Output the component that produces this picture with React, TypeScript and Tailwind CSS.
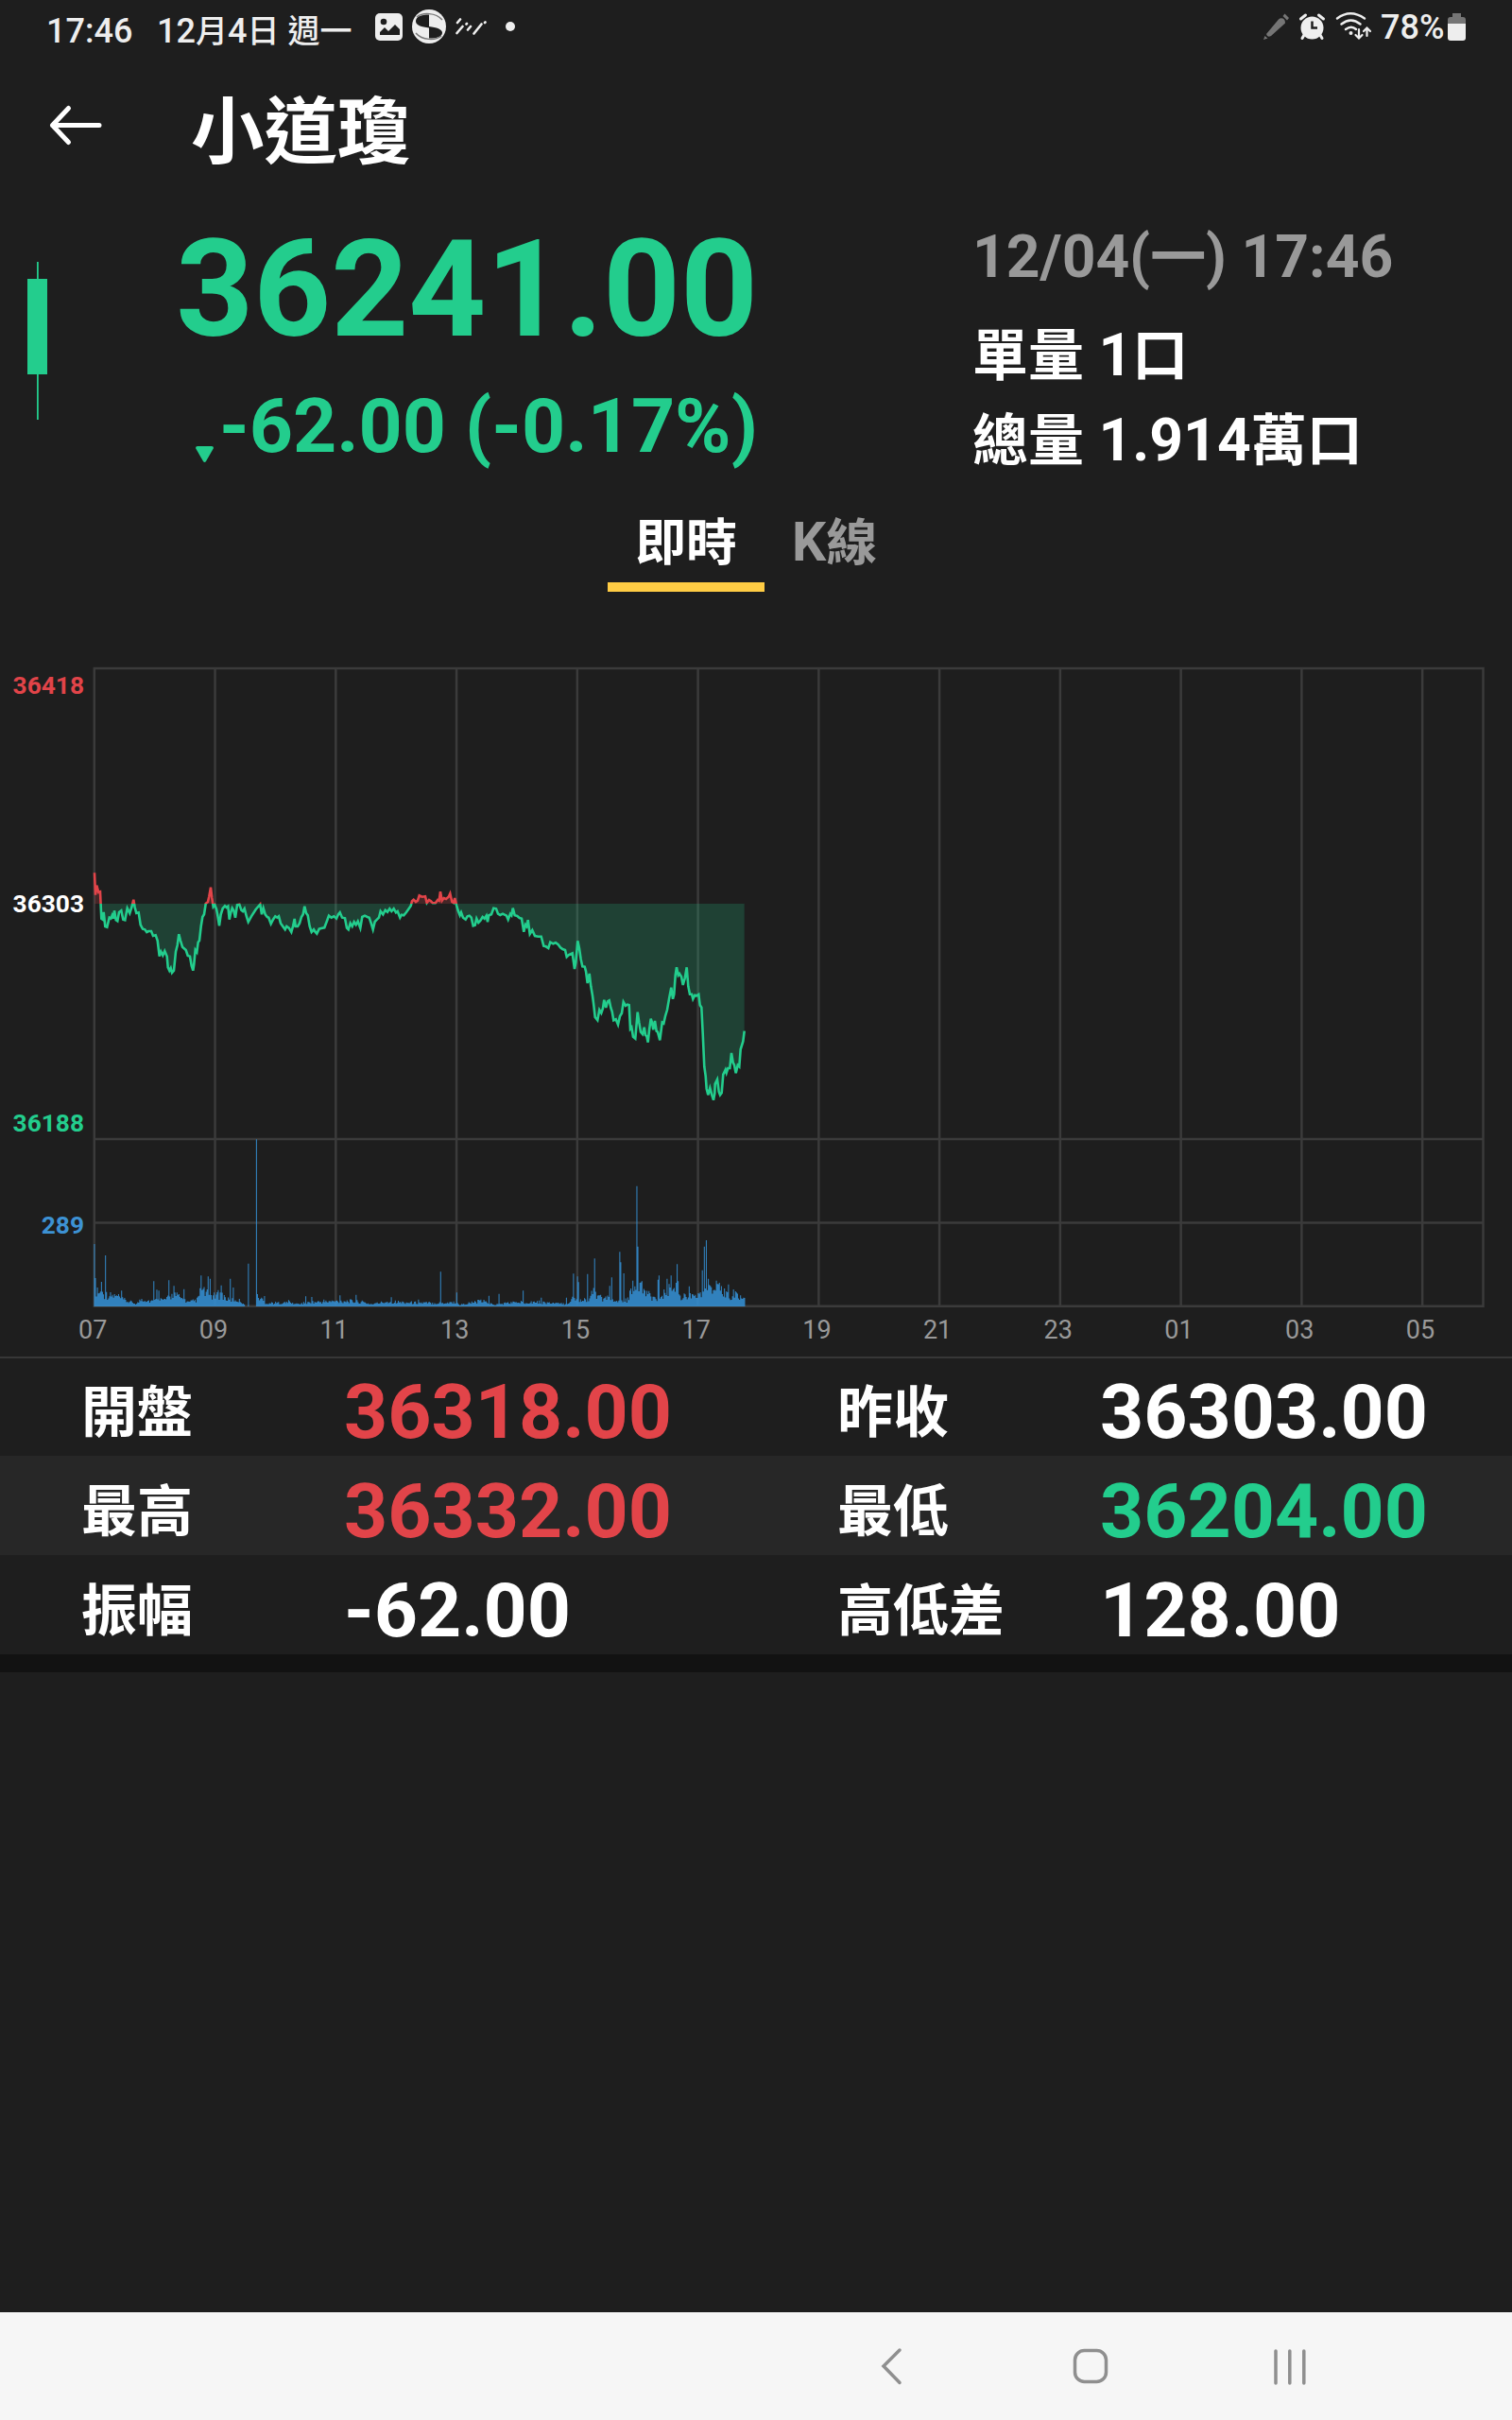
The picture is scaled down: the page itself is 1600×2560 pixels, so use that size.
import { Fragment } from "react";

type Origin = { x: number; y: number };

type Stat = {
  label: string;
  value: string;
  color: string;
};

const UP = "#e24449";
const DOWN = "#23cd8d";
const BLUE = "#3d92d4";

const stats: Stat[][] = [
  [
    { label: "開盤", value: "36318.00", color: "text-[#e24449]" },
    { label: "昨收", value: "36303.00", color: "text-white" },
  ],
  [
    { label: "最高", value: "36332.00", color: "text-[#e24449]" },
    { label: "最低", value: "36204.00", color: "text-[#23cd8d]" },
  ],
  [
    { label: "振幅", value: "-62.00", color: "text-white" },
    { label: "高低差", value: "128.00", color: "text-white" },
  ],
];

const hours = ["07", "09", "11", "13", "15", "17", "19", "21", "23", "01", "03", "05"];

// Price samples, in thirds of a pixel against each session's own origin
const MORNING =
  "300,130 303,200 307,170 313,192 318,190 322,275 326,278 329,255 334,300 340,302 347,272 352,275 356,265 360,275 363,250 368,280 373,283 378,255 385,250 391,278 397,280 404,242 412,258 418,240 424,215 428,240 433,258 440,256 446,295 453,308 460,310 466,318 472,315 480,315 486,330 494,328 500,345 506,395 511,380 517,392 523,378 530,395 533,430 538,440 542,432 546,447 552,440 558,380 563,360 568,325 573,345 579,365 590,375 596,393 603,395 608,425 613,440 616,420 620,375 625,382 629,350 633,345 638,300 643,270 648,262 653,228 660,222 664,205 669,176 673,210 677,238 682,232 687,245 691,265 696,298 701,262 707,243 714,235 719,240 724,236 728,278 733,255 737,242 742,250 747,272 753,232 760,230 766,248 771,252 776,244 783,270 788,286 798,268 812,246 826,230 831,262 836,242 842,262 848,270 853,272 860,292 867,278 874,268 880,272 885,268 891,290 898,300 905,310 910,300 917,305 925,318 930,300 935,276 938,300 945,300 951,290 957,270 962,262 967,236 972,258 977,265 983,300 989,318 996,310 1001,318 1006,323 1013,308 1020,306 1030,304 1037,285 1044,266 1052,272 1060,268 1068,275 1074,262 1079,256 1086,272 1095,274 1101,305 1106,310 1112,290 1118,300 1124,286 1130,295 1136,284 1144,305 1150,270 1158,266 1166,270 1172,272 1178,290 1184,310 1190,285 1197,278 1203,272 1208,252 1216,262 1223,248 1230,254 1237,244 1243,252 1250,244 1257,256";
const AFTERNOON =
  "62,192 70,212 75,203 82,205 90,195 97,185 104,175 108,160 113,155 120,162 126,158 131,142 140,146 150,145 155,165 162,156 168,160 174,166 182,166 190,156 194,158 198,130 203,158 209,150 216,153 224,146 229,136 235,162 240,165 244,150 249,172 254,190 260,205 264,196 270,212 278,218 284,208 290,206 296,212 302,238 308,236 313,215 319,228 325,222 332,210 338,215 344,206 348,226 352,205 360,202 367,182 375,184 381,200 388,204 396,200 408,206 413,218 420,200 424,205 428,182 434,205 442,207 449,213 456,215 463,257 468,235 472,240 476,220 482,264 490,252 498,270 508,272 518,272 526,302 533,304 541,309 547,290 556,295 564,292 572,298 579,307 586,312 594,315 599,337 606,330 617,325 624,375 628,355 634,286 639,310 644,345 649,367 656,368 660,382 665,420 671,390 676,430 681,460 685,490 689,528 697,538 703,505 709,515 714,500 718,473 724,498 729,478 734,475 739,498 743,510 748,538 755,535 762,552 768,525 774,515 779,480 786,492 792,488 797,490 801,565 805,560 810,590 817,596 824,512 829,545 834,575 840,582 845,560 849,585 853,588 857,608 861,570 866,533 870,545 874,568 879,540 884,572 888,575 895,601 902,545 907,548 912,525 918,505 924,470 931,434 936,470 940,455 944,395 948,370 953,395 957,390 963,400 968,426 974,405 980,370 985,430 990,455 996,455 1000,470 1006,458 1012,460 1018,456 1022,490 1027,497 1031,580 1036,685 1040,715 1043,755 1048,775 1054,753 1060,775 1065,791 1069,770 1070,740 1077,726 1082,765 1086,775 1091,768 1096,710 1103,695 1106,705 1111,690 1117,690 1122,642 1127,672 1131,680 1136,706 1142,680 1147,685 1151,630 1159,605 1163,572";

// Chart geometry, in svg pixels
const LEFT = 99.8;
const RIGHT = 1569.5;
const TOP = 67;
const REF = 316;
const SPLIT = 565;
const MID = 653.5;
const BOTTOM = 741.7;
const HOUR_STEP = 127.76;

function parse(src: string, origin: Origin) {
  return src.split(" ").map((pair) => {
    const [x, y] = pair.split(",").map(Number);
    return [LEFT + 0.2 + (x - origin.x) / 3, REF + (y - origin.y) / 3];
  });
}

const prices = [
  ...parse(MORNING, { x: 300, y: 228 }),
  ...parse(AFTERNOON, { x: -900, y: 168 }),
];
const pricePath = "M" + prices.map(([x, y]) => `${x.toFixed(1)} ${y.toFixed(1)}`).join("L");
const lastX = prices[prices.length - 1][0].toFixed(1);
const areaPath = `${pricePath}L${lastX} ${REF}L100 ${REF}Z`;

// Typical volume level by position: [x, height]
const levels = [
  [0, 62], [20, 50], [45, 40], [75, 36], [100, 20], [135, 10], [150, 28], [185, 18],
  [198, 50], [215, 22], [235, 30], [252, 46], [275, 30], [300, 14], [328, 25], [338, 60],
  [360, 45], [385, 35], [402, 45], [425, 24], [445, 25], [465, 20], [476, 8], [477, 0],
  [512, 0], [513, 36], [530, 28], [545, 12], [620, 14], [640, 9], [700, 16], [800, 20],
  [850, 16], [880, 8], [930, 18], [1000, 14], [1100, 12], [1140, 16], [1160, 6],
  [1230, 20], [1270, 6], [1320, 14], [1400, 17], [1480, 10], [1500, 8], [1515, 28],
  [1570, 26], [1582, 50], [1602, 44], [1615, 22], [1640, 36], [1650, 14], [1690, 22],
  [1702, 48], [1718, 72], [1742, 60], [1765, 36], [1800, 26], [1815, 60], [1850, 68],
  [1864, 30], [1885, 46], [1905, 30], [1925, 52], [1960, 62], [1985, 60], [2012, 40],
  [2035, 42], [2063, 28],
];

const spikes = [
  [1, 198], [4, 90], [10, 60], [22, 78], [34, 162], [85, 50], [190, 80], [205, 50],
  [238, 83], [252, 65], [283, 55], [340, 98], [360, 95], [367, 88], [392, 52], [402, 67],
  [430, 88], [440, 60], [488, 136], [513, 530], [540, 33], [618, 20], [670, 32], [690, 30],
  [730, 22], [778, 35], [832, 37], [941, 29], [1030, 22], [1098, 110], [1149, 44],
  [1254, 34], [1283, 40], [1361, 50], [1417, 28], [1500, 28], [1522, 104], [1533, 95],
  [1537, 77], [1564, 103], [1587, 152], [1635, 65], [1641, 92], [1667, 173], [1670, 140],
  [1680, 105], [1708, 82], [1721, 382], [1725, 190], [1739, 80], [1789, 85], [1792, 98],
  [1817, 88], [1830, 98], [1849, 134], [1853, 80], [1887, 64], [1929, 115], [1935, 190],
  [1944, 210], [1948, 88], [1974, 82], [1983, 75], [2012, 70], [2028, 54], [2038, 44],
];

function levelAt(x: number) {
  const i = levels.findIndex(([lx]) => lx > x);
  if (i < 1) return levels[levels.length - 1][1];
  const [x0, h0] = levels[i - 1];
  const [x1, h1] = levels[i];
  return h0 + ((h1 - h0) * (x - x0)) / (x1 - x0);
}

function buildVolume() {
  const step = 3.195;
  const heights = Array.from({ length: 647 }, (_, i) => {
    const noise = (Math.abs(Math.sin(i * 12.9898) * 43758.5453) % 1) * 0.7 + 0.5;
    return levelAt(i * step) * noise;
  });
  spikes.forEach(([x, h]) => {
    heights[Math.round(x / step)] = h;
  });
  return heights
    .map((h, i) =>
      h < 1
        ? ""
        : `M${(LEFT - 0.4 + (i * step) / 3).toFixed(2)} ${BOTTOM + 0.3}v${(-h / 3).toFixed(1)}h1.07v${(h / 3).toFixed(1)}z`
    )
    .join("");
}

const volumePath = buildVolume();

// Han characters sit slightly smaller than the digits beside them
function Txt({ children }: { children: string }) {
  return (
    <>
      {children.split(/([\u4e00-\u9fff]+)/).map((part, i) =>
        i % 2 ? (
          <span key={i} className="text-[0.945em] leading-[0]">
            {part}
          </span>
        ) : (
          <Fragment key={i}>{part}</Fragment>
        )
      )}
    </>
  );
}

function StatusBar() {
  return (
    <div className="h-[60px] flex items-start justify-between pl-[49px] pr-[49px] text-[36px] leading-none font-medium text-[#eeeeee]">
      <div className="flex items-start">
        <span className="w-[117px] pt-[15px]">17:46</span>
        <span className="w-[231px] pt-[15px] whitespace-nowrap">
          <Txt>12月4日 週一</Txt>
        </span>
        <svg className="w-[150px] h-[60px]" viewBox="0 0 150 60">
          <rect x="0" y="14" width="29" height="29" rx="5" fill="#eee" />
          <circle cx="9" cy="23" r="3.3" fill="#1e1e1e" />
          <path d="M5 37v-3l5-5 4 4 7-7 5 5v6z" fill="#1e1e1e" />
          <circle cx="57" cy="28" r="18" fill="#eee" />
          <path d="M57 15.500c-9 0-14 2.500-14 7 0 4 6 6 14 7zM57 28c8 1 14 3 14 6.500 0 4-5 6-14 6z" fill="#1e1e1e" />
          <path d="M44 18c6-5 20-5 27 3M70 38c-6 5-20 5-27-3" fill="none" stroke="#777" strokeWidth="1.5" />
          <g stroke="#eee" strokeWidth="2.6" strokeLinecap="round">
            <path d="M86.500 35l6-7M101 28l-3 3.500M104.500 35.500l8-10M87 24l3-3.500M116 24l.5-.5M97 25l-.5.500" />
          </g>
          <circle cx="143" cy="28" r="5" fill="#eee" />
        </svg>
      </div>
      <div className="flex items-start">
        <svg className="w-[125px] h-[60px]" viewBox="0 0 125 60">
          <g fill="#757575">
            <path d="M1 42l1.500-4 3 2.500zM4 36L17 20.500q2-2 4.500-1t2.500 5L9 38q-4 2-5-2z" />
            <path d="M21.500 17l2-2.500 4.500 4.500-2 2.500z" />
          </g>
          <circle cx="52.500" cy="29.500" r="12" fill="#eee" />
          <path d="M40.500 20l5-4M64.500 20l-5-4M44 37l-2 3.500M61 37l2 3.500" stroke="#eee" strokeWidth="3" strokeLinecap="round" />
          <path d="M52.500 22.500v7h5.500" stroke="#1e1e1e" strokeWidth="2.500" fill="none" />
          <g fill="none" stroke="#eee" strokeWidth="2.500" strokeLinecap="round">
            <path d="M79 19.500q14-10.500 29 0M83.500 25.500q10-8 20 0M88 31q6-4.500 11 0" />
            <path d="M102 31v9M98.500 37l3.500 3.500 3.500-3.500M110.500 38v-8M107 33l3.500-3.500 3.500 3.500" strokeWidth="2.200" />
          </g>
          <circle cx="93.500" cy="35" r="2" fill="#eee" />
        </svg>
        <span className="w-[71px] pt-[11px]">78%</span>
        <svg className="w-[19px] h-[60px]" viewBox="0 0 19 60">
          <path d="M5 14h9v4h-9z" fill="#757575" />
          <path d="M0 25v-4q0-3 3-3h13q3 0 3 3v4z" fill="#757575" />
          <path d="M0 25h19v15q0 3-3 3H3q-3 0-3-3z" fill="#eee" />
        </svg>
      </div>
    </div>
  );
}

function TitleBar() {
  return (
    <header className="h-[160px] flex items-start pl-[50px]">
      <svg className="w-[62px] h-[50px] mt-[47px]" viewBox="0 0 62 50" fill="none" stroke="white" strokeWidth="5" strokeLinecap="round" strokeLinejoin="round">
        <path d="M22.500 7.500L5.500 25.500L22.500 43.500M5.500 25.500h49.500" />
      </svg>
      <h1 className="ml-[90px] mt-[38px] text-[82px] leading-none font-bold text-white">
        <Txt>小道瓊</Txt>
      </h1>
    </header>
  );
}

function Quote() {
  return (
    <section className="h-[300px] flex items-start">
      <svg className="w-[80px] h-[300px]" viewBox="0 0 80 300" fill={DOWN}>
        <rect x="39" y="57" width="1.800" height="167" />
        <rect x="29" y="75" width="21" height="101" />
      </svg>
      <div className="w-[722px] pt-[15px] flex flex-col items-end font-bold text-[#23cd8d]">
        <div className="text-[143px] leading-none">36241.00</div>
        <div className="mt-[33px] flex items-end text-[80.6px] leading-none">
          <svg className="w-[19px] h-[17px] mb-[3px] mr-[6px]" viewBox="0 0 19 17" fill={DOWN}>
            <path d="M0 2q0-2 2-2h15q2 0 2 2l-8 14q-1.500 2-3 0z" />
          </svg>
          -62.00 (-0.17%)
        </div>
      </div>
      <div className="ml-[227px] pt-[21px] text-[62.4px] leading-[62px] font-bold text-white whitespace-nowrap">
        <div className="text-[#999999]">
          <Txt>12/04(一) 17:46</Txt>
        </div>
        <div className="mt-[42px]">
          <Txt>單量 1口</Txt>
        </div>
        <div className="mt-[28px]">
          <Txt>總量 1.914萬口</Txt>
        </div>
      </div>
    </section>
  );
}

function Tabs() {
  return (
    <nav className="h-[120px] flex justify-center items-start text-[57px] leading-none font-bold">
      <div className="w-[166px] h-[106px] pt-[25px] text-center text-white border-b-[10px] border-[#ffcc44]">
        <Txt>即時</Txt>
      </div>
      <div className="w-[148px] pt-[25px] text-center text-[#999999]">
        <Txt>K線</Txt>
      </div>
    </nav>
  );
}

function Chart() {
  return (
    <svg className="block w-[1600px] h-[795px]" viewBox="0 0 1600 795">
      <clipPath id="above">
        <rect x="98" y="0" width="1500" height={REF} />
      </clipPath>
      <clipPath id="below">
        <rect x="98" y={REF} width="1500" height="400" />
      </clipPath>

      <g stroke="#3b3b3b" strokeWidth="2.500" fill="none">
        <path d={`M${LEFT} ${TOP}H${RIGHT}V${BOTTOM}H${LEFT}Z`} />
        <path d={`M${LEFT} ${SPLIT}H${RIGHT}M${LEFT} ${MID}H${RIGHT}`} />
        {hours.slice(1).map((h, i) => (
          <path key={h} d={`M${LEFT + (i + 1) * HOUR_STEP} ${TOP}V${BOTTOM}`} />
        ))}
      </g>

      <path d={volumePath} fill="#3490d4" fillOpacity="0.88" />

      <g clipPath="url(#above)">
        <path d={areaPath} fill={UP} fillOpacity="0.2" />
        <path d={pricePath} fill="none" stroke={UP} strokeWidth="2.600" />
      </g>
      <g clipPath="url(#below)">
        <path d={areaPath} fill={DOWN} fillOpacity="0.2" />
        <path d={pricePath} fill="none" stroke={DOWN} strokeWidth="2.600" />
      </g>

      <g fontSize="26.3" fontWeight="700" textAnchor="end">
        <text x="89" y="94" fill={UP}>36418</text>
        <text x="89" y="325" fill="#fff">36303</text>
        <text x="89" y="557" fill={DOWN}>36188</text>
        <text x="89" y="665" fill={BLUE}>289</text>
      </g>
      <g fontSize="27" fill="#999" textAnchor="middle">
        {hours.map((h, i) => (
          <text key={h} x={98.2 + i * 127.7} y="775.500">{h}</text>
        ))}
      </g>
    </svg>
  );
}

function Stats() {
  return (
    <section className="border-t-2 border-[#373737] leading-none text-white">
      {stats.map((row, i) => (
        <div key={i} className={`flex items-start ${i === 0 ? "h-[103px]" : "h-[105px]"} ${i === 1 ? "bg-[#272727]" : ""}`}>
          {row.map((s) => (
            <div key={s.label} className={`w-[800px] flex items-start pl-[86px] ${i === 0 ? "pt-[16px]" : "pt-[18px]"}`}>
              <span className="w-[278px] pt-[10px] text-[62.4px] leading-[62px] font-bold">
                <Txt>{s.label}</Txt>
              </span>
              <span className={`text-[80.6px] leading-[81px] font-bold ${s.color}`}>{s.value}</span>
            </div>
          ))}
        </div>
      ))}
      <div className="h-[19px] bg-[#121212]" />
    </section>
  );
}

function NavBar() {
  return (
    <footer className="mt-auto h-[114px] bg-[#f6f6f6] flex items-center">
      <svg className="w-[1600px] h-[114px]" viewBox="0 0 1600 114" fill="none" stroke="#8f8f8f" strokeWidth="3.500" strokeLinecap="round">
        <path d="M952 40L935 57L952 74.500" />
        <rect x="1137.500" y="40.500" width="33" height="33" rx="10" />
        <path d="M1350 41v34M1364.800 41v34M1379.800 41v34" />
      </svg>
    </footer>
  );
}

export default function App() {
  return (
    <div className="w-[1600px] h-[2560px] flex flex-col overflow-hidden bg-[#1e1e1e] font-[Roboto,'Noto_Sans_CJK_TC',sans-serif]">
      <StatusBar />
      <TitleBar />
      <Quote />
      <Tabs />
      <Chart />
      <Stats />
      <NavBar />
    </div>
  );
}
